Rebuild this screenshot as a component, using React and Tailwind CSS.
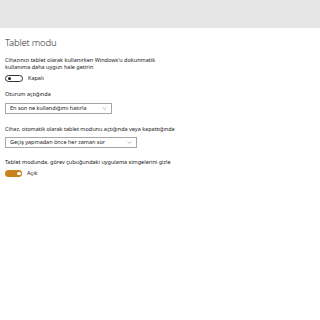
export default function App() {
  const f = { fontFamily: '"Noto Sans", "Open Sans", sans-serif' };
  return (
    <div className="w-[320px] h-[320px] bg-white overflow-hidden" style={f}>
      <div className="h-[28px] bg-[#e6e6e6]" />
      <div className="px-[5px] text-[#1a1a1a]">
        <div className="mt-[9px] text-[9.5px] leading-[12px] font-light tracking-[-0.2px] text-[#333]">Tablet modu</div>
        <div className="mt-[8px] text-[5.5px] leading-[7px] w-[160px]">
          Cihazınızı tablet olarak kullanırken Windows'u dokunmatik kullanıma daha uygun hale getirin
        </div>
        <div className="mt-[4px] flex items-center gap-[5px]">
          <div className="w-[18px] h-[7px] rounded-full border border-[#333] flex items-center px-[1.5px]">
            <div className="w-[3.5px] h-[3.5px] rounded-full bg-[#222]" />
          </div>
          <span className="text-[5.5px] leading-[7px]">Kapalı</span>
        </div>
        <div className="mt-[9px] text-[5.5px] leading-[7px]">Oturum açtığında</div>
        <div className="mt-[5px] w-[107px] h-[11px] border border-[#a6a6a6] flex items-center justify-between pl-[4px] pr-[4px]">
          <span className="text-[5.5px] leading-[7px]">En son ne kullandığımı hatırla</span>
          <svg width="5" height="3" viewBox="0 0 10 6"><path d="M1 1 L5 5 L9 1" fill="none" stroke="#777" strokeWidth="1" /></svg>
        </div>
        <div className="mt-[12px] text-[5.5px] leading-[7px]">Cihaz, otomatik olarak tablet modunu açtığında veya kapattığında</div>
        <div className="mt-[4px] w-[132px] h-[11px] border border-[#a6a6a6] flex items-center justify-between pl-[4px] pr-[4px]">
          <span className="text-[5.5px] leading-[7px]">Geçiş yapmadan önce her zaman sor</span>
          <svg width="5" height="3" viewBox="0 0 10 6"><path d="M1 1 L5 5 L9 1" fill="none" stroke="#777" strokeWidth="1" /></svg>
        </div>
        <div className="mt-[11px] text-[5.5px] leading-[7px]">Tablet modunda, görev çubuğundaki uygulama simgelerini gizle</div>
        <div className="mt-[4px] flex items-center gap-[5px]">
          <div className="w-[17px] h-[7px] rounded-full bg-[#c8811c] flex items-center justify-end px-[1.5px]">
            <div className="w-[3.5px] h-[3.5px] rounded-full bg-white" />
          </div>
          <span className="text-[5.5px] leading-[7px]">Açık</span>
        </div>
      </div>
    </div>
  );
}
